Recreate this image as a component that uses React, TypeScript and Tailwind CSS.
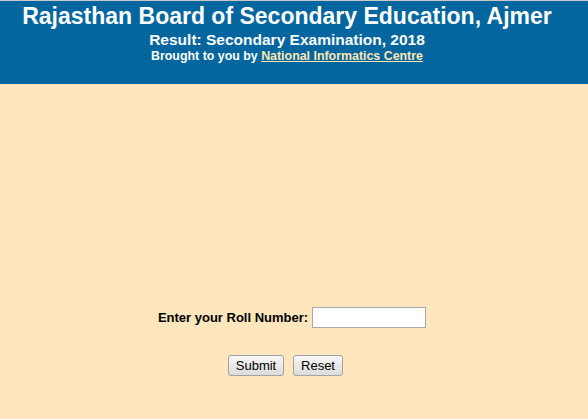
import React from "react";

export default function App() {
  return (
    <div
      className="min-h-screen bg-[#ffe6bc]"
      style={{ fontFamily: '"Liberation Sans", Arial, sans-serif' }}
    >
      <div className="h-[84px] border-t border-[#c9c9c9] bg-[#03669f] pt-[2px] pr-[14px] text-center font-bold text-white">
        <div className="text-[23px] leading-[26px]">
          Rajasthan Board of Secondary Education, Ajmer
        </div>
        <div className="mt-[2px] text-[15.5px] leading-[18px]">
          Result: Secondary Examination, 2018
        </div>
        <div className="text-[12.4px] leading-[14px]">
          Brought to you by{" "}
          <a href="#" className="text-[#ffe6b4] underline">
            National Informatics Centre
          </a>
        </div>
      </div>
      <div className="pt-[223px]">
        <div className="flex items-center justify-center pr-[4px]">
          <label className="text-[13px] font-bold leading-[15px] text-black">
            Enter your Roll Number:
          </label>
          <input
            type="text"
            className="ml-[4px] h-[21px] w-[114px] border border-[#a9a9a9] bg-white px-1 text-[13px] outline-none"
          />
        </div>
        <div className="mt-[27px] flex justify-center gap-[9px] pr-[17px]">
          <button className="h-[21px] w-[56px] rounded-[3px] border border-[#a3a3a3] bg-gradient-to-b from-[#f7f7f7] to-[#dcdcdc] text-[13px] leading-[19px] text-black">
            Submit
          </button>
          <button className="h-[21px] w-[50px] rounded-[3px] border border-[#a3a3a3] bg-gradient-to-b from-[#f7f7f7] to-[#dcdcdc] text-[13px] leading-[19px] text-black">
            Reset
          </button>
        </div>
      </div>
    </div>
  );
}
